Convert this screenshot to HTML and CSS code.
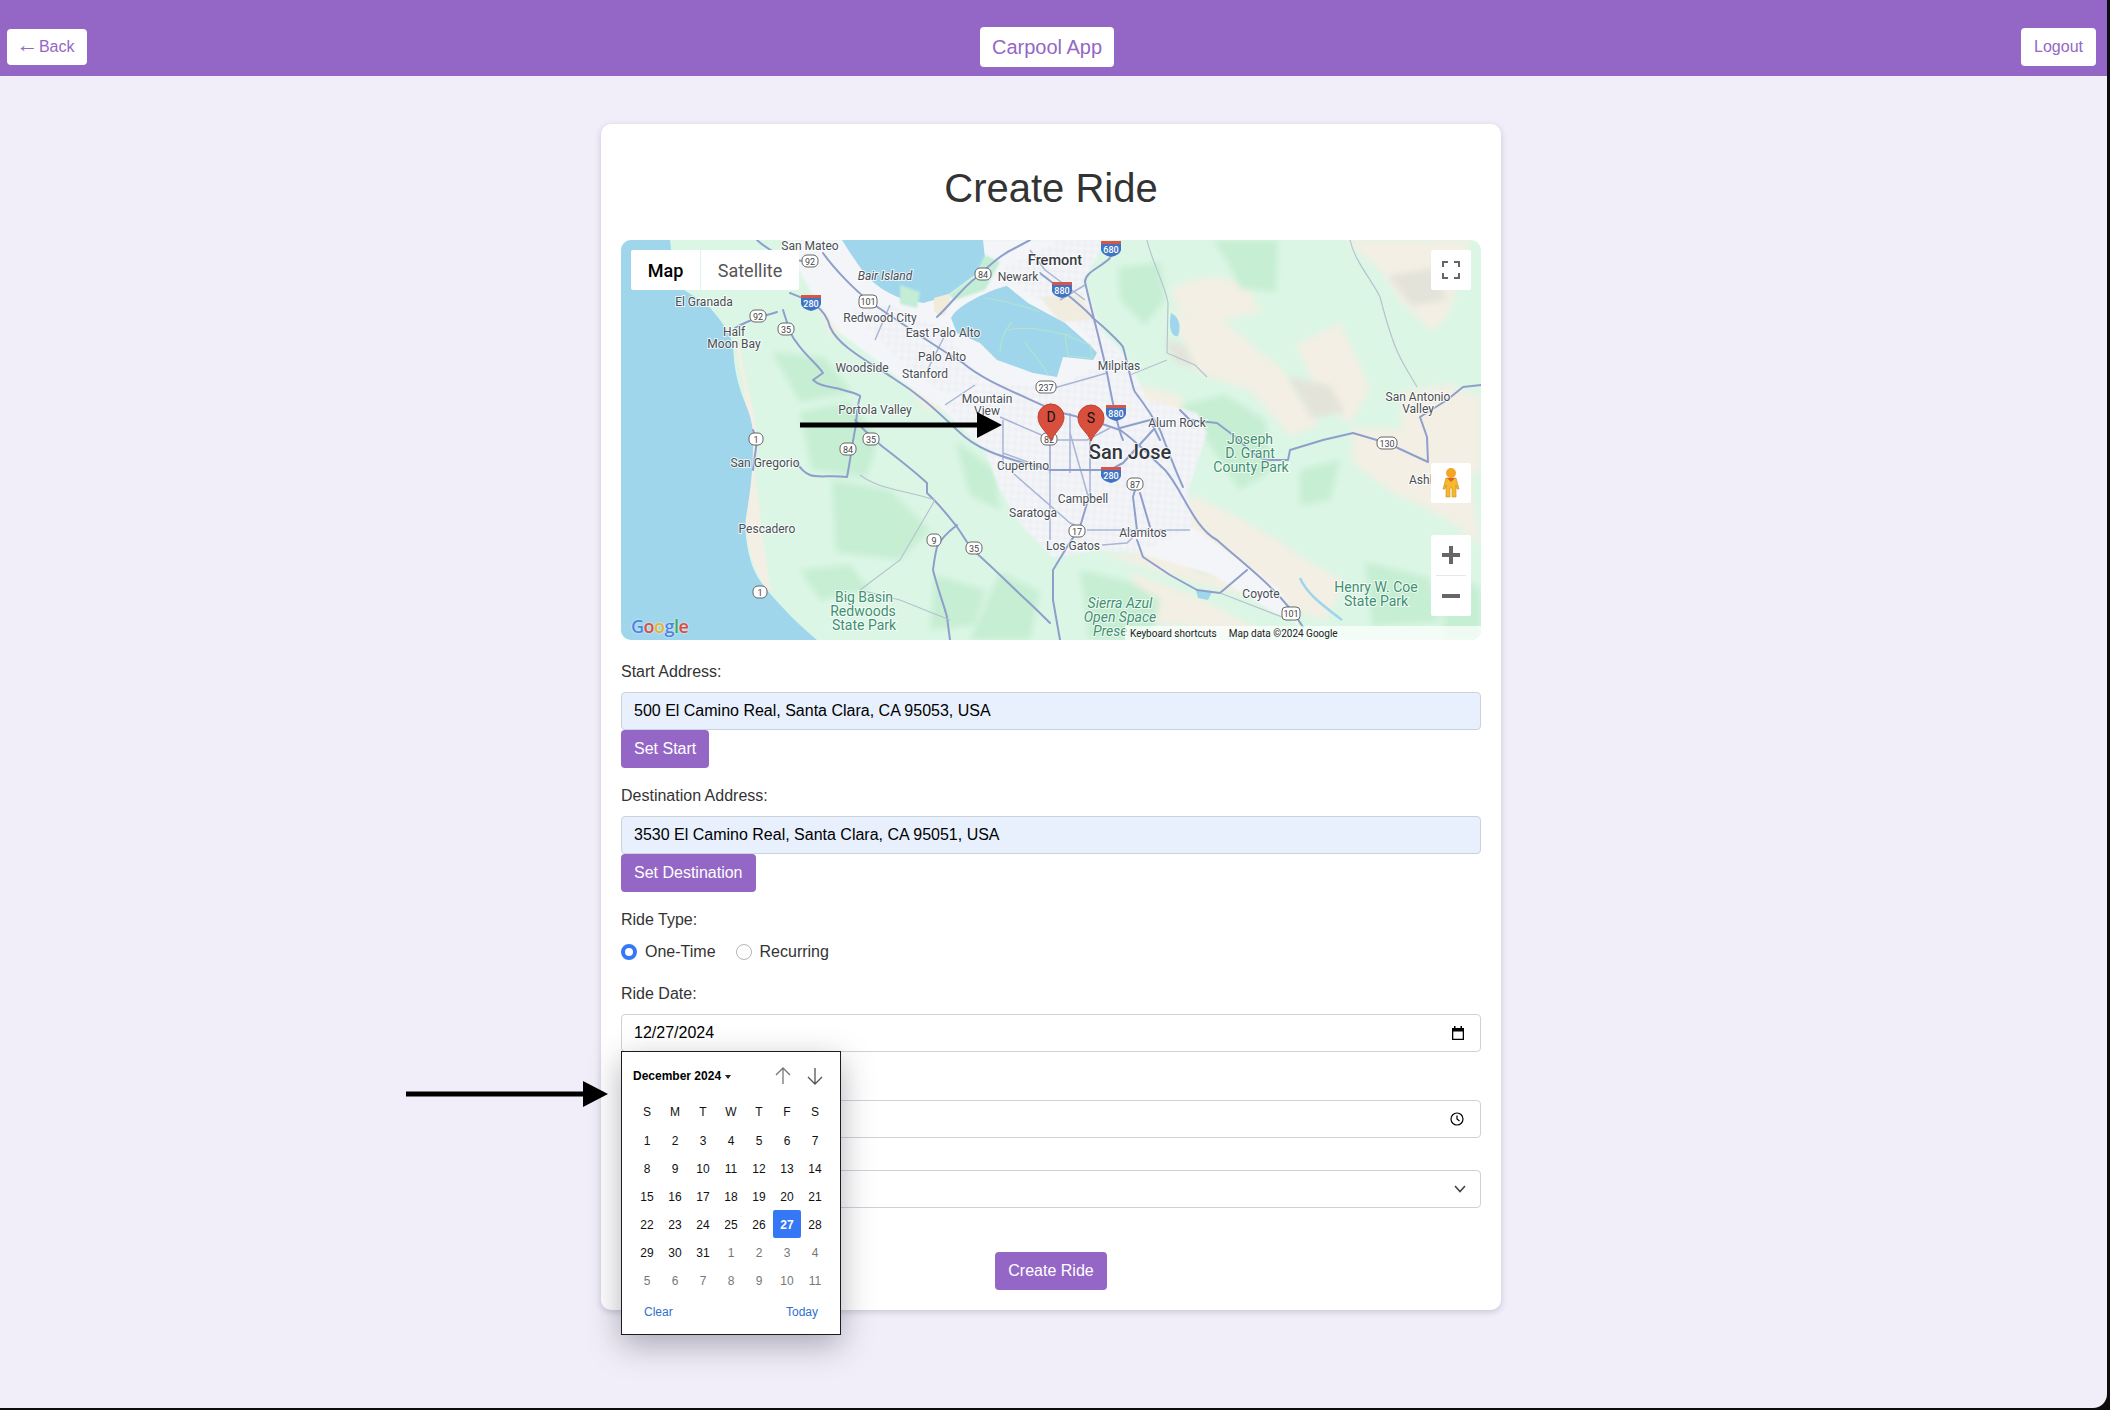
FILE: index.html
```html
<!DOCTYPE html>
<html lang="en">
<head>
    <meta charset="UTF-8">
    <meta name="viewport" content="width=device-width, initial-scale=1.0">
    <title>Carpool App - Create Ride</title>
    <link rel="stylesheet" href="styles.css">
</head>
<body>
<div class="window">
    <header class="top-bar">
        <a class="bar-btn back-btn" href="#"><span class="back-arrow">←</span> Back</a>
        <a class="bar-btn app-title" href="#">Carpool App</a>
        <a class="bar-btn logout-btn" href="#">Logout</a>
    </header>

    <main class="page">
        <section class="card">
            <h1 class="card-title">Create Ride</h1>

            <div class="map">
                <svg class="map-art" viewBox="621 240 860 400" preserveAspectRatio="none">
                    <defs>
                        <pattern id="streets" width="7" height="7" patternUnits="userSpaceOnUse" patternTransform="rotate(4)">
                            <path d="M0 0H7M0 0V7" stroke="#d9dde9" stroke-width="0.8" fill="none"/>
                        </pattern>
                        <filter id="soft-3" x="-15%" y="-15%" width="130%" height="130%"><feGaussianBlur stdDeviation="3"/></filter>
                        <filter id="soft-1" x="-5%" y="-5%" width="110%" height="110%"><feGaussianBlur stdDeviation="0.8"/></filter>
                    </defs>
                    <!-- land -->
                    <rect x="621" y="240" width="860" height="400" fill="#dbf6e5"/>

                    <!-- beige high ground -->
                    <g fill="#f3efe4" filter="url(#soft-3)">
                        <path d="M1170 290Q1200 270 1245 282L1262 312 1215 322 1180 312Z"/>
                        <path d="M1170 312L1225 322 1285 372 1320 425 1290 436 1252 392 1196 372Z"/>
                        <path d="M1296 345L1340 322 1370 388 1350 425 1318 395Z"/>
                        <path d="M1345 240H1470L1450 312 1432 332 1400 300 1380 270Z"/>
                        <path d="M1400 392L1450 384 1481 398V470L1470 478 1481 545 1448 520 1420 505 1402 445Z"/>
                        <path d="M1352 428L1432 430 1442 512 1395 495 1352 462Z"/>
                        <path d="M1193 495L1240 518 1277 540 1300 556 1345 582 1325 622 1278 602 1228 592 1170 575 1100 553 1140 553Z"/>
                        <path d="M1130 572L1200 598 1262 632 1140 622Z"/>
                        <path d="M1120 380L1180 395 1200 435 1160 430Z"/>
                        <path d="M815 296L840 300 850 330 830 335Z"/>
                        <path d="M1033 297L1087 300 1092 320 1050 322Z"/>
                        <path d="M905 378L935 380 960 410 925 410Z"/>
                    </g>
                    <g fill="#e4e3da" filter="url(#soft-3)">
                        <path d="M1288 376L1330 386 1345 412 1312 418Z"/>
                        <path d="M1388 276L1432 268 1448 300 1412 306Z"/>
                        <path d="M1165 340L1185 345 1195 368 1175 362Z"/>
                    </g>

                    <!-- darker hills -->
                    <g fill="#c6eed3" filter="url(#soft-3)">
                        <path d="M800 412L850 402 878 440 866 478 812 470Z"/>
                        <path d="M772 352L825 358 852 392 800 402Z"/>
                        <path d="M832 480L890 490 930 530 900 560 836 552Z"/>
                        <path d="M800 570L850 565 870 590 820 600Z"/>
                        <path d="M935 575L985 590 975 625 930 630Z"/>
                        <path d="M955 440L995 470 1000 510 970 495Z"/>
                        <path d="M1000 572L1040 592 1030 640 970 640Z"/>
                        <path d="M1118 268L1160 262 1165 300 1145 325 1120 300Z"/>
                        <path d="M1213 240H1278L1276 292 1240 288 1228 262Z"/>
                        <path d="M1180 405L1225 395 1265 420 1272 470 1240 490 1210 445Z"/>
                        <path d="M1365 562L1430 578 1440 622 1372 626Z"/>
                        <path d="M1080 570L1130 582 1160 600 1150 640 1090 640Z"/>
                        <path d="M1440 560L1481 590V640H1445Z"/>
                        <path d="M1300 470L1340 460 1330 500 1300 505Z"/>
                        <path d="M1190 550L1225 552 1220 575 1195 570Z"/>
                    </g>

                    <!-- ocean -->
                    <path fill="#f3efe4" stroke="#f3efe4" stroke-width="4" d="M738 345C742 380 752 405 754 430 756 450 753 480 748 515 748 540 752 565 770 590"/>
                    <path fill="#9fd6ec" d="M621 240H670C672 262 676 280 684 290 696 298 706 302 712 310 722 322 730 332 733 345 734 370 738 385 744 400 750 415 754 425 753 445 753 470 750 495 746 517 744 535 748 552 752 565 758 582 772 596 785 610 796 622 808 632 817 640H621Z"/>

                    <!-- towns -->
                    <path fill="#f4f5f8" filter="url(#soft-1)" d="M783 240H1107L1083 280 1103 333 1127 357 1147 400 1197 413 1207 433 1187 493 1193 527 1280 590 1300 625 1270 610 1213 575 1140 553 1100 550 1053 557 1023 527 1000 490 985 450 940 407 900 380 880 363 840 333 810 290Z"/>
                    <g filter="url(#soft-1)" fill="url(#streets)">
                        <path d="M985 385L1060 385 1100 365 1125 360 1147 400 1197 413 1207 433 1187 493 1193 527 1140 553 1100 550 1053 557 1023 527 1000 490 985 450 945 405Z"/>
                        <path d="M1000 270L1060 240H1107L1083 280 1103 333 1125 360 1095 362 1090 340 1065 310 1030 295Z"/>
                        <path d="M850 310L890 305 945 330 985 385 945 395 900 360Z"/>
                    </g>
                    <path fill="#f0ecdf" filter="url(#soft-1)" d="M1040 297L1080 295 1095 320 1060 322Z"/>

                    <!-- bay -->
                    <path fill="#9fd6ec" d="M842 240H983L985 258 975 275 945 297 923 303 900 298C885 292 870 282 862 270 855 260 848 250 842 240Z"/>
                    <path fill="#9fd6ec" d="M951 318C955 310 965 304 976 298 988 292 998 288 1007 286L1028 303 1065 323 1090 345 1097 353 1093 360 1063 357 1057 377 1033 373 997 360 980 343 957 333Z"/>
                    <path fill="#c3edd4" filter="url(#soft-1)" d="M985 255L1000 262 985 290 955 300 948 295 975 276Z"/>
                    <path fill="#c3edd4" filter="url(#soft-1)" d="M900 285L920 292 917 308 900 304Z"/>
                    <path fill="#f1ecd9" d="M934 298L948 294 951 302 944 316 934 312Z"/>
                    <g fill="none" stroke="#b3e2ce" stroke-width="1.200">
                        <path d="M985 298C1000 300 1020 305 1040 312M1008 330C1030 325 1050 332 1070 335M1025 342C1030 352 1040 358 1048 375M1000 352C1000 340 1005 330 1012 322"/>
                        <path d="M1065 335L1090 345 1092 358 1068 356Z"/>
                    </g>
                    <path fill="#9fd6ec" d="M1171 313C1178 316 1182 325 1178 336 1172 338 1168 328 1171 313Z"/>
                    <path fill="none" stroke="#9fd6ec" stroke-width="2.500" d="M1300 578C1306 592 1318 602 1342 620"/>
                    <path fill="#9fd6ec" d="M1196 590L1212 592 1208 600 1198 598Z"/>

                    <!-- city streets -->
                    <g fill="none" stroke="#a9b5d6" stroke-width="1.500" stroke-linejoin="round">
                        <path d="M1047 390L1107 373M1000 417L1053 440H1087L1110 428M1003 420V467"/>
                        <path d="M1050 403V473M1070 413V473M1090 440V473"/>
                        <path d="M1050 433V540M1070 433L1090 503M1090 440V500"/>
                        <path d="M1013 473L1070 523 1085 530"/>
                        <path d="M1003 453L1050 470"/>
                        <path d="M1087 530H1190M1102 545L1127 543 1137 533"/>
                        <path d="M890 305L875 340M945 335L925 375M975 385L945 405"/>
                        <path d="M1085 300L1045 270 1030 250M1060 300L1085 285"/>
                    </g>

                    <!-- main roads -->
                    <g fill="none" stroke="#8e9fcb" stroke-width="2" stroke-linejoin="round" stroke-linecap="round">
                        <path d="M790 293C808 300 825 306 830 327 838 345 862 358 893 378 917 393 933 407 957 430 975 448 995 456 1050 470H1110L1123 463 1153 430"/>
                        <path d="M823 253C835 270 855 290 870 302 897 320 930 343 963 363 983 380 1010 390 1057 412 1083 417 1100 423 1120 430 1135 440 1147 453 1165 470 1183 490 1193 527 1217 540 1247 567 1280 590 1303 627 1317 640"/>
                        <path d="M1110 258C1100 268 1085 272 1085 282 1090 305 1100 340 1107 373 1112 400 1117 427 1123 440"/>
                        <path d="M1040 273C1055 285 1082 305 1093 318 1110 332 1122 345 1123 347 1128 365 1133 390 1135 392 1145 405 1153 417 1160 430 1168 450 1175 470 1183 487"/>
                        <path d="M937 317C950 305 965 285 977 277 990 265 1000 255 1017 247L1030 240"/>
                        <path d="M757 240C770 252 790 262 810 261M777 312C765 316 752 318 735 328"/>
                        <path d="M783 310C788 325 790 335 797 343 805 355 818 365 823 373L813 380C822 388 832 386 843 390 850 392 862 395 860 397 856 410 857 420 855 430 852 445 850 462 847 477 830 475 818 478 810 475 803 472 800 468 797 463"/>
                        <path d="M855 420C865 432 875 440 883 447 900 460 915 472 927 483L927 493C940 505 950 518 957 527 965 538 968 545 973 550 990 565 1005 580 1023 597 1035 608 1042 615 1050 623"/>
                        <path d="M957 525C948 532 940 540 937 547 935 555 934 562 933 570 938 590 944 605 947 617L950 640"/>
                        <path d="M1090 493L1080 527 1067 547 1053 570V600L1060 640"/>
                        <path d="M1180 410L1190 420 1217 423 1233 435C1245 445 1255 458 1267 460H1288L1290 450 1323 440 1353 433 1387 443 1428 462 1427 437 1420 417 1447 400 1463 387 1481 385"/>
                        <path d="M1137 483L1133 497 1137 530M1140 493L1150 527"/>
                        <path d="M1137 540L1143 557 1170 575 1197 590 1220 593 1247 570"/>
                        <path d="M1160 440L1150 420 1120 428"/>
                        <path d="M753 470L757 440 753 430"/>
                    </g>
                    <g fill="none" stroke="#b6bfd0" stroke-width="1.100">
                        <path d="M1350 240C1355 262 1372 280 1380 297 1386 320 1392 340 1398 353 1405 368 1412 378 1417 387"/>
                        <path d="M1147 240C1152 262 1165 285 1168 303L1167 353 1195 365 1207 377"/>
                        <path d="M1167 360L1130 375"/>
                        <path d="M860 475C880 490 905 490 935 500L900 560 860 590 900 600 950 620"/>
                        <path d="M1220 593L1290 620"/>
                    </g>

                    <!-- town and park names -->
                    <g class="place">
                        <text x="810" y="250">San Mateo</text>
                        <text x="1018" y="281">Newark</text>
                        <text class="italic" x="885" y="280">Bair Island</text>
                        <text x="704" y="306">El Granada</text>
                        <text x="880" y="322">Redwood City</text>
                        <text x="734" y="336">Half</text>
                        <text x="734" y="348">Moon Bay</text>
                        <text x="943" y="337">East Palo Alto</text>
                        <text x="942" y="361">Palo Alto</text>
                        <text x="862" y="372">Woodside</text>
                        <text x="925" y="378">Stanford</text>
                        <text x="987" y="403">Mountain</text>
                        <text x="987" y="415">View</text>
                        <text x="875" y="414">Portola Valley</text>
                        <text x="765" y="467">San Gregorio</text>
                        <text x="1023" y="470">Cupertino</text>
                        <text x="1033" y="517">Saratoga</text>
                        <text x="767" y="533">Pescadero</text>
                        <text x="1073" y="550">Los Gatos</text>
                        <text x="1119" y="370">Milpitas</text>
                        <text x="1177" y="427">Alum Rock</text>
                        <text x="1083" y="503">Campbell</text>
                        <text x="1143" y="537">Alamitos</text>
                        <text x="1418" y="401">San Antonio</text>
                        <text x="1418" y="413">Valley</text>
                        <text x="1261" y="598">Coyote</text>
                        <text class="start" x="1409" y="484">Ashland</text>
                        <text class="big" x="1055" y="265">Fremont</text>
                        <text class="city" x="1130" y="459">San Jose</text>
                    </g>
                    <g class="place park">
                        <text x="864" y="602">Big Basin</text>
                        <text x="863" y="616">Redwoods</text>
                        <text x="864" y="630">State Park</text>
                        <text x="1250" y="444">Joseph</text>
                        <text x="1250" y="458">D. Grant</text>
                        <text x="1251" y="472">County Park</text>
                        <text x="1376" y="592">Henry W. Coe</text>
                        <text x="1376" y="606">State Park</text>
                        <text class="italic" x="1120" y="608">Sierra Azul</text>
                        <text class="italic" x="1120" y="622">Open Space</text>
                        <text class="italic start" x="1093" y="636">Prese</text>
                    </g>

                    <!-- route shields -->
                    <g class="shield">
                        <rect x="802" y="255" width="16" height="12" rx="5"/><text x="810" y="264.500">92</text>
                        <rect x="859" y="295" width="18" height="13" rx="4"/><text x="868" y="305">101</text>
                        <rect x="975" y="268" width="16" height="12" rx="5"/><text x="983" y="277.500">84</text>
                        <rect x="750" y="310" width="16" height="12" rx="5"/><text x="758" y="319.500">92</text>
                        <rect x="778" y="323" width="16" height="12" rx="5"/><text x="786" y="332.500">35</text>
                        <rect x="1036" y="381" width="20" height="12" rx="5"/><text x="1046" y="390.500">237</text>
                        <rect x="749" y="433" width="14" height="12" rx="5"/><text x="756" y="442.500">1</text>
                        <rect x="863" y="433" width="16" height="12" rx="5"/><text x="871" y="442.500">35</text>
                        <rect x="840" y="443" width="16" height="12" rx="5"/><text x="848" y="452.500">84</text>
                        <rect x="927" y="534" width="14" height="12" rx="5"/><text x="934" y="543.500">9</text>
                        <rect x="966" y="542" width="16" height="12" rx="5"/><text x="974" y="551.500">35</text>
                        <rect x="753" y="586" width="14" height="12" rx="5"/><text x="760" y="595.500">1</text>
                        <rect x="1127" y="478" width="16" height="12" rx="5"/><text x="1135" y="487.500">87</text>
                        <rect x="1069" y="525" width="16" height="12" rx="5"/><text x="1077" y="534.500">17</text>
                        <rect x="1041" y="433" width="16" height="12" rx="5"/><text x="1049" y="442.500">82</text>
                        <rect x="1377" y="437" width="20" height="12" rx="5"/><text x="1387" y="446.500">130</text>
                        <rect x="1282" y="607" width="18" height="13" rx="4"/><text x="1291" y="617">101</text>
                    </g>
                    <g class="interstate">
                        <path d="M801 296H821V304Q820 309 811 311 802 309 801 304Z"/><rect x="801" y="295" width="20" height="3"/><text x="811" y="307">280</text>
                        <path d="M1101 242H1121V250Q1120 255 1111 257 1102 255 1101 250Z"/><rect x="1101" y="241" width="20" height="3"/><text x="1111" y="253">680</text>
                        <path d="M1052 283H1072V291Q1071 296 1062 298 1053 296 1052 291Z"/><rect x="1052" y="282" width="20" height="3"/><text x="1062" y="294">880</text>
                        <path d="M1106 406H1126V414Q1125 419 1116 421 1107 419 1106 414Z"/><rect x="1106" y="405" width="20" height="3"/><text x="1116" y="417">880</text>
                        <path d="M1101 468H1121V476Q1120 481 1111 483 1102 481 1101 476Z"/><rect x="1101" y="467" width="20" height="3"/><text x="1111" y="479">280</text>
                    </g>

                    <!-- pins -->
                    <g class="pin">
                        <path d="M1051 441C1047 431 1038 427 1038 417A13 13 0 0 1 1064 417C1064 427 1055 431 1051 441Z"/>
                        <text x="1051" y="422">D</text>
                        <path d="M1091 441C1087 431 1078 428 1078 418A13 13 0 0 1 1104 418C1104 428 1095 431 1091 441Z"/>
                        <text x="1091" y="423">S</text>
                    </g>
                </svg>

                <div class="map-types">
                    <span class="map-type map-type-on">Map</span>
                    <span class="map-type">Satellite</span>
                </div>
                <button class="map-ctl fullscreen-ctl">
                    <svg width="18" height="18" viewBox="0 0 18 18"><path d="M1 6V1H6M12 1H17V6M17 12V17H12M6 17H1V12" fill="none" stroke="#666" stroke-width="2"/></svg>
                </button>
                <button class="map-ctl pegman-ctl">
                    <svg width="18" height="30" viewBox="0 0 18 30">
                        <circle cx="9" cy="5" r="5" fill="#f5a623"/>
                        <path d="M4 10H14L17 21H15L14 17V29H10V20H8V29H4V17L3 21H1Z" fill="#f5b82e" stroke="#c98a1c" stroke-width=".6"/>
                        <path d="M5 10H13L9 14Z" fill="#d9622b"/>
                    </svg>
                </button>
                <div class="map-ctl zoom-ctl">
                    <span class="zoom-btn">
                        <svg width="18" height="18" viewBox="0 0 18 18"><path d="M9 0V18M0 9H18" stroke="#666" stroke-width="4"/></svg>
                    </span>
                    <span class="zoom-line"></span>
                    <span class="zoom-btn">
                        <svg width="18" height="18" viewBox="0 0 18 18"><path d="M0 9H18" stroke="#666" stroke-width="4"/></svg>
                    </span>
                </div>
                <div class="google-mark"><span class="g-blue">G</span><span class="g-red">o</span><span class="g-yellow">o</span><span class="g-blue">g</span><span class="g-green">l</span><span class="g-red">e</span></div>
                <div class="map-credits">
                    <span>Keyboard shortcuts</span>
                    <span>Map data ©2024 Google</span>
                </div>
                <svg class="note-arrow map-note" width="202" height="26" viewBox="0 0 202 26"><path d="M0 10.500H177V0L202 13 177 26V15.500H0Z"/></svg>
            </div>

            <label class="field-label first-label">Start Address:</label>
            <div class="field field-filled">500 El Camino Real, Santa Clara, CA 95053, USA</div>
            <a class="action-btn" href="#">Set Start</a>

            <label class="field-label">Destination Address:</label>
            <div class="field field-filled">3530 El Camino Real, Santa Clara, CA 95051, USA</div>
            <a class="action-btn" href="#">Set Destination</a>

            <label class="field-label">Ride Type:</label>
            <div class="radio-row">
                <span class="radio radio-on"></span><span class="radio-text">One-Time</span>
                <span class="radio"></span><span class="radio-text">Recurring</span>
            </div>

            <label class="field-label">Ride Date:</label>
            <div class="date-wrap">
                <div class="field field-icon">
                    <span>12/27/2024</span>
                    <svg width="14" height="14" viewBox="0 0 14 14"><path d="M1 2H3V0H4.500V2H9.500V0H11V2H13V14H1ZM2.300 5.500V12.700H11.700V5.500Z"/></svg>
                </div>
                <div class="calendar">
                    <div class="cal-top">
                        <span class="cal-month">December 2024 <i class="cal-caret"></i></span>
                        <span class="cal-nav">
                            <svg width="16" height="18" viewBox="0 0 16 18"><path d="M8 17V1M1 8L8 1 15 8" fill="none" stroke="#777" stroke-width="1.300"/></svg>
                            <svg width="16" height="18" viewBox="0 0 16 18"><path d="M8 1V17M1 10L8 17 15 10" fill="none" stroke="#555" stroke-width="1.300"/></svg>
                        </span>
                    </div>
                    <div class="cal-grid">
                        <span>S</span><span>M</span><span>T</span><span>W</span><span>T</span><span>F</span><span>S</span>
                        <span>1</span><span>2</span><span>3</span><span>4</span><span>5</span><span>6</span><span>7</span>
                        <span>8</span><span>9</span><span>10</span><span>11</span><span>12</span><span>13</span><span>14</span>
                        <span>15</span><span>16</span><span>17</span><span>18</span><span>19</span><span>20</span><span>21</span>
                        <span>22</span><span>23</span><span>24</span><span>25</span><span>26</span><span class="cal-picked">27</span><span>28</span>
                        <span>29</span><span>30</span><span>31</span><span class="cal-off">1</span><span class="cal-off">2</span><span class="cal-off">3</span><span class="cal-off">4</span>
                        <span class="cal-off">5</span><span class="cal-off">6</span><span class="cal-off">7</span><span class="cal-off">8</span><span class="cal-off">9</span><span class="cal-off">10</span><span class="cal-off">11</span>
                    </div>
                    <div class="cal-foot">
                        <a href="#">Clear</a>
                        <a href="#">Today</a>
                    </div>
                </div>
            </div>

            <div class="field field-icon time-field">
                <span></span>
                <svg width="14" height="14" viewBox="0 0 14 14"><circle cx="7" cy="7" r="6" fill="none" stroke="#000" stroke-width="1.200"/><path d="M7 3.500V7L9.500 9" fill="none" stroke="#000" stroke-width="1.200"/></svg>
            </div>
            <div class="field field-icon select-field">
                <span></span>
                <svg width="12" height="8" viewBox="0 0 12 8"><path d="M1 1L6 6.500 11 1" fill="none" stroke="#444" stroke-width="1.600"/></svg>
            </div>

            <div class="submit-row">
                <a class="action-btn" href="#">Create Ride</a>
            </div>

            <svg class="note-arrow cal-note" width="202" height="26" viewBox="0 0 202 26"><path d="M0 10.500H177V0L202 13 177 26V15.500H0Z"/></svg>
        </section>
    </main>
</div>
</body>
</html>
```

FILE: styles.css
```css
html, body {
    margin: 0;
    padding: 0;
    height: 1410px;
    overflow: hidden;
    background: #0d0d10;
    font-family: "Liberation Sans", Arial, sans-serif;
}

.window {
    width: 2107px;
    height: 1408px;
    background: #f1eef9;
    border-bottom-right-radius: 14px;
    overflow: hidden;
}

.top-bar {
    display: flex;
    justify-content: space-between;
    align-items: center;
    height: 76px;
    box-sizing: border-box;
    padding: 18px 11px 0 7px;
    background: #9467c6;
}

.bar-btn {
    display: flex;
    align-items: center;
    justify-content: center;
    background: #fff;
    color: #9467c6;
    text-decoration: none;
    border-radius: 4px;
    font-size: 16px;
    white-space: pre;
}

.back-btn {
    width: 80px;
    height: 36px;
    box-sizing: border-box;
    padding-right: 3px;
}

.back-arrow {
    font-size: 22px;
    line-height: 1;
    margin: 0 -4px 5px 0;
}

.app-title {
    width: 134px;
    height: 40px;
    margin-right: 14px;
    font-size: 20px;
}

.logout-btn {
    width: 75px;
    height: 38px;
}

.page {
    display: flex;
    justify-content: center;
    padding: 48px 5px 0 0;
}

.card {
    position: relative;
    width: 900px;
    box-sizing: border-box;
    padding: 20px;
    background: #fff;
    border-radius: 10px;
    box-shadow: 0 2px 6px rgba(60, 50, 90, 0.22);
}

.card-title {
    margin: 21px 0 29px;
    text-align: center;
    font-size: 40px;
    font-weight: normal;
    line-height: 46px;
    color: #333;
}

/* map */
.map {
    position: relative;
    height: 400px;
    border-radius: 10px;
    overflow: hidden;
}

.map-art {
    display: block;
    width: 860px;
    height: 400px;
}

.place text {
    font-family: Roboto, sans-serif;
    font-size: 12px;
    text-anchor: middle;
    fill: #4a4f55;
    stroke: #fff;
    stroke-width: 2px;
    stroke-opacity: 0.75;
    paint-order: stroke;
}

.place text.start {
    text-anchor: start;
}

.place text.italic {
    font-style: italic;
}

.place text.big {
    font-size: 14.500px;
    font-weight: 500;
    fill: #3a3d42;
}

.place text.city {
    font-size: 20px;
    font-weight: 500;
    fill: #33363b;
}

.park text {
    font-size: 14px;
    fill: #3f9070;
}

.shield rect {
    fill: #fff;
    stroke: #666;
    stroke-width: 1;
}

.shield text {
    font-family: Roboto, sans-serif;
    font-size: 9px;
    text-anchor: middle;
    fill: #444;
}

.interstate path {
    fill: #3f74c4;
}

.interstate rect {
    fill: #d4574a;
}

.interstate text {
    font-family: Roboto, sans-serif;
    font-size: 9px;
    font-weight: 500;
    text-anchor: middle;
    fill: #fff;
}

.pin path {
    fill: #d94f3d;
    stroke: #c4412f;
    stroke-width: 1;
}

.pin text {
    font-family: Roboto, sans-serif;
    font-size: 14px;
    text-anchor: middle;
    fill: #111;
}

.map-types {
    position: absolute;
    left: 10px;
    top: 10px;
    display: flex;
    gap: 1px;
    font-family: Roboto, sans-serif;
    font-size: 18px;
}

.map-type {
    display: flex;
    align-items: center;
    justify-content: center;
    height: 40px;
    width: 98px;
    background: #fff;
    color: #565656;
    border-radius: 0 2px 2px 0;
}

.map-type-on {
    width: 69px;
    color: #000;
    font-weight: 500;
    border-radius: 2px 0 0 2px;
}

.map-ctl {
    position: absolute;
    left: 810px;
    width: 40px;
    padding: 0;
    border: none;
    background: #fff;
    border-radius: 2px;
    display: flex;
    align-items: center;
    justify-content: center;
}

.fullscreen-ctl {
    top: 10px;
    height: 40px;
}

.pegman-ctl {
    top: 223px;
    height: 40px;
}

.zoom-ctl {
    top: 295px;
    height: 81px;
    flex-direction: column;
}

.zoom-btn {
    display: flex;
    align-items: center;
    justify-content: center;
    height: 40px;
}

.zoom-line {
    width: 30px;
    height: 1px;
    background: #e6e6e6;
}

.google-mark {
    position: absolute;
    left: 10px;
    top: 374px;
    font-family: "Open Sans", sans-serif;
    font-size: 18px;
    line-height: 24px;
    font-weight: 600;
    letter-spacing: -0.5px;
    text-shadow: 0 0 2px #fff;
}

.g-blue { color: #4d83e6; }
.g-red { color: #dc4b3e; }
.g-yellow { color: #e8b32c; }
.g-green { color: #3fa85a; }

.map-credits {
    position: absolute;
    left: 504px;
    right: 0;
    bottom: 0;
    height: 14px;
    display: flex;
    gap: 12px;
    align-items: center;
    padding-left: 5px;
    background: rgba(255, 255, 255, 0.7);
    font-family: Roboto, sans-serif;
    font-size: 10px;
    color: #222;
}

.note-arrow {
    position: absolute;
    display: block;
}

.map-note {
    left: 179px;
    top: 172px;
}

.cal-note {
    left: -195px;
    top: 957px;
}

/* form */
.field-label {
    display: block;
    height: 18px;
    line-height: 18px;
    margin: 19px 0 11px;
    font-size: 16px;
    color: #333;
}

.first-label {
    margin-top: 23px;
}

.field {
    height: 38px;
    box-sizing: border-box;
    padding: 0 12px;
    border: 1px solid #ccd2d9;
    border-radius: 4px;
    font-size: 16px;
    line-height: 36px;
    color: #000;
}

.field-filled {
    background: #e8f0fe;
}

.field-icon {
    display: flex;
    justify-content: space-between;
    align-items: center;
    padding-right: 15px;
}

.action-btn {
    display: inline-block;
    height: 38px;
    line-height: 38px;
    padding: 0 13px;
    background: #9467c6;
    color: #fff;
    border-radius: 4px;
    font-size: 16px;
    text-decoration: none;
    vertical-align: top;
}

.radio-row {
    display: flex;
    align-items: center;
    height: 16px;
    margin: 15px 0 25px;
    font-size: 16px;
    color: #333;
}

.radio {
    width: 16px;
    height: 16px;
    box-sizing: border-box;
    border: 1px solid #b5b5b5;
    border-radius: 50%;
    background: #fff;
}

.radio-on {
    border: 4px solid #3478f6;
}

.radio-text {
    margin-left: 8px;
    margin-right: 20px;
}

.date-wrap {
    position: relative;
}

.time-field {
    margin-top: 48px;
    padding-right: 16px;
}

.select-field {
    margin-top: 32px;
    padding-right: 14px;
}

.submit-row {
    display: flex;
    justify-content: center;
    margin-top: 44px;
}

/* date popup */
.calendar {
    position: absolute;
    left: 0;
    top: 37px;
    z-index: 5;
    width: 220px;
    height: 284px;
    box-sizing: border-box;
    padding: 10px 10px 10px 11px;
    background: #fff;
    border: 1px solid #1c1c1c;
    box-shadow: 0 10px 30px rgba(40, 40, 60, 0.35);
}

.cal-top {
    display: flex;
    justify-content: space-between;
    align-items: center;
    height: 28px;
    margin-bottom: 8px;
    padding-right: 7px;
}

.cal-month {
    font-size: 12px;
    font-weight: bold;
    color: #000;
}

.cal-caret {
    display: inline-block;
    margin-left: 1px;
    vertical-align: middle;
    border-left: 3.500px solid transparent;
    border-right: 3.500px solid transparent;
    border-top: 4px solid #222;
}

.cal-nav {
    display: flex;
    gap: 16px;
}

.cal-grid {
    display: grid;
    grid-template-columns: repeat(7, 28px);
    grid-auto-rows: 28px;
    font-size: 12px;
    color: #111;
}

.cal-grid span {
    display: flex;
    align-items: center;
    justify-content: center;
}

.cal-grid span:nth-child(n+8) {
    padding-top: 1px;
}

.cal-grid .cal-off {
    color: #777;
}

.cal-grid .cal-picked {
    background: #3478f6;
    color: #fff;
    font-weight: bold;
    border-radius: 2px;
}

.cal-foot {
    display: flex;
    justify-content: space-between;
    margin-top: 9px;
    padding: 0 12px 0 11px;
    font-size: 12px;
    line-height: 18px;
}

.cal-foot a {
    color: #2f6fd0;
    text-decoration: none;
}
```
